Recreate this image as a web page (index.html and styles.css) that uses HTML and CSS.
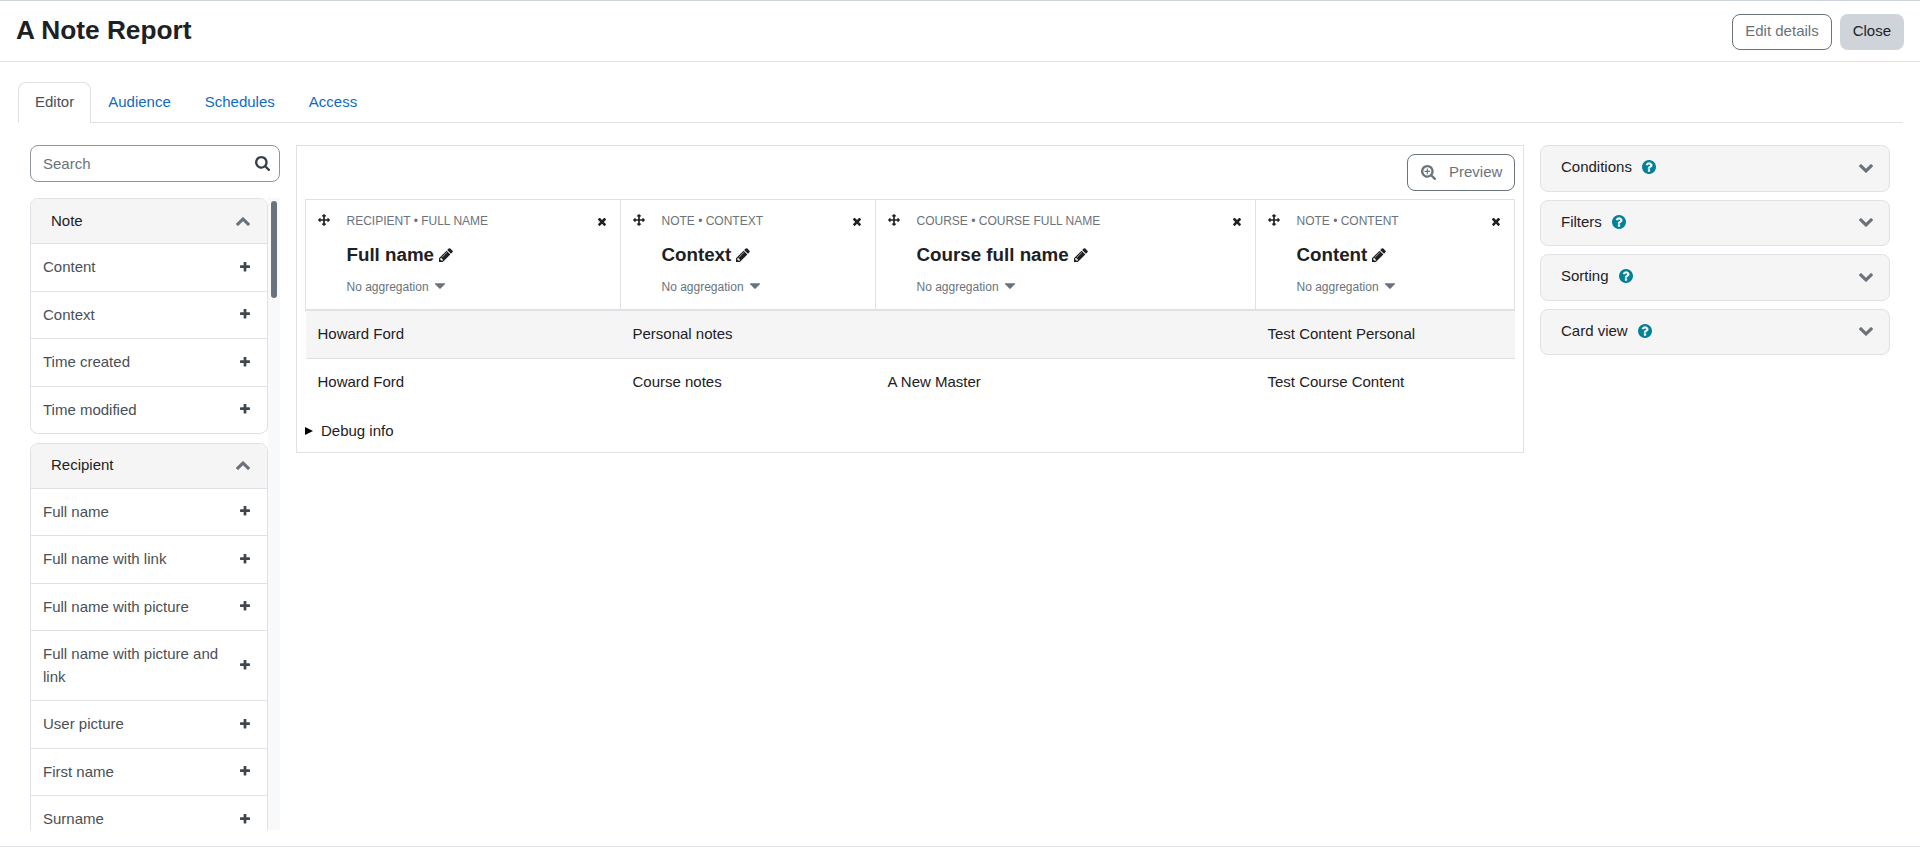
FILE: index.html
```html
<!DOCTYPE html>
<html lang="en">
<head>
<meta charset="utf-8">
<title>A Note Report</title>
<link rel="stylesheet" href="styles.css">
</head>
<body>
<svg class="defs" width="0" height="0" aria-hidden="true">
  <defs>
    <symbol id="i-plus" viewBox="192 192 1408 1408"><path fill="currentColor" d="M1600 736v192q0 40-28 68t-68 28h-416v416q0 40-28 68t-68 28h-192q-40 0-68-28t-28-68v-416h-416q-40 0-68-28t-28-68v-192q0-40 28-68t68-28h416v-416q0-40 28-68t68-28h192q40 0 68 28t28 68v416h416q40 0 68 28t28 68z"/></symbol>
    <symbol id="i-x" viewBox="302 238 1188 1316"><path fill="currentColor" d="M1490 1322q0 40-28 68l-136 136q-28 28-68 28t-68-28l-294-294-294 294q-28 28-68 28t-68-28l-136-136q-28-28-28-68t28-68l294-294-294-294q-28-28-28-68t28-68l136-136q28-28 68-28t68 28l294 294 294-294q28-28 68-28t68 28l136 136q28 28 28 68t-28 68l-294 294 294 294q28 28 28 68z"/></symbol>
    <symbol id="i-move" viewBox="0 0 1792 1792"><path fill="currentColor" d="M1792 896q0 26-19 45l-256 256q-19 19-45 19t-45-19-19-45v-128h-384v384h128q26 0 45 19t19 45-19 45l-256 256q-19 19-45 19t-45-19l-256-256q-19-19-19-45t19-45 45-19h128v-384h-384v128q0 26-19 45t-45 19-45-19l-256-256q-19-19-19-45t19-45l256-256q19-19 45-19t45 19 19 45v128h384v-384h-128q-26 0-45-19t-19-45 19-45l256-256q19-19 45-19t45 19l256 256q19 19 19 45t-19 45-45 19h-128v384h384v-128q0-26 19-45t45-19 45 19l256 256q19 19 19 45z"/></symbol>
    <symbol id="i-pencil" viewBox="128 128 1536 1536"><path fill="currentColor" d="M491 1536l91-91-235-235-91 91v107h128v128h107zm523-928q0-22-22-22-10 0-17 7l-542 542q-7 7-7 17 0 22 22 22 10 0 17-7l542-542q7-7 7-17zm-54-192l416 416-832 832h-416v-416zm683 96q0 53-37 90l-166 166-416-416 166-165q36-38 90-38 53 0 91 38l235 234q37 39 37 91z"/></symbol>
    <symbol id="i-caret" viewBox="384 640 1024 576"><path fill="currentColor" d="M1408 704q0 26-19 45l-448 448q-19 19-45 19t-45-19l-448-448q-19-19-19-45t19-45 45-19h896q26 0 45 19t19 45z"/></symbol>
    <symbol id="i-up" viewBox="109 480 1574 1035"><path fill="currentColor" d="M1683 1331l-166 165q-19 19-45 19t-45-19l-531-531-531 531q-19 19-45 19t-45-19l-166-165q-19-19-19-45.500t19-45.500l742-741q19-19 45-19t45 19l742 741q19 19 19 45.500t-19 45.500z"/></symbol>
    <symbol id="i-down" viewBox="109 533 1574 1035"><path fill="currentColor" d="M1683 808l-742 741q-19 19-45 19t-45-19l-742-741q-19-19-19-45.500t19-45.500l166-165q19-19 45-19t45 19l531 531 531-531q19-19 45-19t45 19l166 165q19 19 19 45.500t-19 45.500z"/></symbol>
    <symbol id="i-search" viewBox="64 128 1664 1664"><path fill="currentColor" d="M1216 832q0-185-131.500-316.500t-316.500-131.500-316.500 131.500-131.500 316.500 131.500 316.500 316.500 131.500 316.500-131.500 131.500-316.500zm512 832q0 52-38 90t-90 38q-54 0-90-38l-343-342q-179 124-399 124-143 0-273.500-55.500t-225-150-150-225-55.500-273.500 55.500-273.500 150-225 225-150 273.500-55.500 273.500 55.500 225 150 150 225 55.500 273.500q0 220-124 399l343 343q37 37 37 90z"/></symbol>
    <symbol id="i-zoom" viewBox="64 128 1664 1664"><path fill="currentColor" d="M1088 800v64q0 13-9.500 22.500t-22.500 9.500h-224v224q0 13-9.500 22.500t-22.500 9.500h-64q-13 0-22.500-9.500t-9.500-22.500v-224h-224q-13 0-22.500-9.500t-9.500-22.500v-64q0-13 9.500-22.500t22.500-9.500h224v-224q0-13 9.500-22.500t22.500-9.500h64q13 0 22.500 9.500t9.500 22.500v224h224q13 0 22.500 9.500t9.500 22.500zm128 32q0-185-131.500-316.500t-316.500-131.500-316.500 131.500-131.500 316.500 131.500 316.500 316.500 131.500 316.500-131.500 131.500-316.500zm512 832q0 53-37.500 90.500t-90.500 37.500q-54 0-90-38l-343-342q-179 124-399 124-143 0-273.500-55.500t-225-150-150-225-55.500-273.500 55.500-273.500 150-225 225-150 273.500-55.500 273.500 55.500 225 150 150 225 55.500 273.500q0 220-124 399l343 343q37 37 37 90z"/></symbol>
    <symbol id="i-help" viewBox="128 128 1536 1536"><path fill="currentColor" d="M1024 1376v-192q0-14-9-23t-23-9h-192q-14 0-23 9t-9 23v192q0 14 9 23t23 9h192q14 0 23-9t9-23zm256-672q0-88-55.500-163t-138.500-116-170-41q-243 0-371 213-15 24 8 42l132 100q7 6 19 6 16 0 25-12 53-68 86-92 34-24 86-24 48 0 85.500 26t37.500 59q0 38-20 61t-68 45q-63 28-115.500 86.500t-52.500 125.500v36q0 14 9 23t23 9h192q14 0 23-9t9-23q0-19 21.500-49.500t54.500-49.500q32-18 49-28.500t46-35 44.500-48 28-60.500 12.500-81zm384 192q0 209-103 385.500t-279.500 279.500-385.500 103-385.500-103-279.500-279.500-103-385.500 103-385.500 279.500-279.500 385.500-103 385.500 103 279.500 279.500 103 385.500z"/></symbol>
  </defs>
</svg>

<header class="page-header">
  <h1 class="page-title">A Note Report</h1>
  <div class="header-actions">
    <button class="btn btn-outline" type="button">Edit details</button>
    <button class="btn btn-secondary" type="button">Close</button>
  </div>
</header>

<nav class="tabs">
  <a class="tab tab-active">Editor</a>
  <a class="tab">Audience</a>
  <a class="tab">Schedules</a>
  <a class="tab">Access</a>
</nav>

<main class="editor">
  <aside class="sidebar">
    <div class="search">
      <input class="search-input" type="text" placeholder="Search">
      <svg class="search-icon"><use href="#i-search"/></svg>
    </div>
    <div class="sidebar-scroll">
      <div class="sidebar-list">
        <section class="card">
          <div class="card-head"><span>Note</span><svg class="ic-up"><use href="#i-up"/></svg></div>
          <div class="row"><span>Content</span><svg class="ic-plus"><use href="#i-plus"/></svg></div>
          <div class="row"><span>Context</span><svg class="ic-plus"><use href="#i-plus"/></svg></div>
          <div class="row"><span>Time created</span><svg class="ic-plus"><use href="#i-plus"/></svg></div>
          <div class="row"><span>Time modified</span><svg class="ic-plus"><use href="#i-plus"/></svg></div>
        </section>
        <section class="card">
          <div class="card-head"><span>Recipient</span><svg class="ic-up"><use href="#i-up"/></svg></div>
          <div class="row"><span>Full name</span><svg class="ic-plus"><use href="#i-plus"/></svg></div>
          <div class="row"><span>Full name with link</span><svg class="ic-plus"><use href="#i-plus"/></svg></div>
          <div class="row"><span>Full name with picture</span><svg class="ic-plus"><use href="#i-plus"/></svg></div>
          <div class="row"><span>Full name with picture and link</span><svg class="ic-plus"><use href="#i-plus"/></svg></div>
          <div class="row"><span>User picture</span><svg class="ic-plus"><use href="#i-plus"/></svg></div>
          <div class="row"><span>First name</span><svg class="ic-plus"><use href="#i-plus"/></svg></div>
          <div class="row"><span>Surname</span><svg class="ic-plus"><use href="#i-plus"/></svg></div>
        </section>
      </div>
      <div class="scroll-track"><div class="scroll-thumb"></div></div>
    </div>
  </aside>

  <section class="report">
    <div class="report-bar">
      <button class="btn btn-outline btn-preview" type="button"><svg class="ic-zoom"><use href="#i-zoom"/></svg>Preview</button>
    </div>
    <table class="grid">
      <colgroup><col class="c1"><col class="c2"><col class="c3"><col class="c4"></colgroup>
      <thead>
        <tr>
          <th>
            <div class="col-top"><svg class="ic-move"><use href="#i-move"/></svg><span class="col-sub">RECIPIENT • FULL NAME</span><svg class="ic-x"><use href="#i-x"/></svg></div>
            <div class="col-title">Full name<svg class="ic-pencil"><use href="#i-pencil"/></svg></div>
            <div class="col-agg">No aggregation<svg class="ic-caret"><use href="#i-caret"/></svg></div>
          </th>
          <th>
            <div class="col-top"><svg class="ic-move"><use href="#i-move"/></svg><span class="col-sub">NOTE • CONTEXT</span><svg class="ic-x"><use href="#i-x"/></svg></div>
            <div class="col-title">Context<svg class="ic-pencil"><use href="#i-pencil"/></svg></div>
            <div class="col-agg">No aggregation<svg class="ic-caret"><use href="#i-caret"/></svg></div>
          </th>
          <th>
            <div class="col-top"><svg class="ic-move"><use href="#i-move"/></svg><span class="col-sub">COURSE • COURSE FULL NAME</span><svg class="ic-x"><use href="#i-x"/></svg></div>
            <div class="col-title">Course full name<svg class="ic-pencil"><use href="#i-pencil"/></svg></div>
            <div class="col-agg">No aggregation<svg class="ic-caret"><use href="#i-caret"/></svg></div>
          </th>
          <th>
            <div class="col-top"><svg class="ic-move"><use href="#i-move"/></svg><span class="col-sub">NOTE • CONTENT</span><svg class="ic-x"><use href="#i-x"/></svg></div>
            <div class="col-title">Content<svg class="ic-pencil"><use href="#i-pencil"/></svg></div>
            <div class="col-agg">No aggregation<svg class="ic-caret"><use href="#i-caret"/></svg></div>
          </th>
        </tr>
      </thead>
      <tbody>
        <tr class="striped"><td>Howard Ford</td><td>Personal notes</td><td></td><td>Test Content Personal</td></tr>
        <tr><td>Howard Ford</td><td>Course notes</td><td>A New Master</td><td>Test Course Content</td></tr>
      </tbody>
    </table>
    <details class="debug"><summary>Debug info</summary></details>
  </section>

  <aside class="settings">
    <div class="setting"><span>Conditions</span><svg class="ic-help"><use href="#i-help"/></svg><svg class="ic-down"><use href="#i-down"/></svg></div>
    <div class="setting"><span>Filters</span><svg class="ic-help"><use href="#i-help"/></svg><svg class="ic-down"><use href="#i-down"/></svg></div>
    <div class="setting"><span>Sorting</span><svg class="ic-help"><use href="#i-help"/></svg><svg class="ic-down"><use href="#i-down"/></svg></div>
    <div class="setting"><span>Card view</span><svg class="ic-help"><use href="#i-help"/></svg><svg class="ic-down"><use href="#i-down"/></svg></div>
  </aside>
</main>
<footer class="page-footer"></footer>
</body>
</html>
```

FILE: styles.css
```css
* { box-sizing: border-box; }
html, body { margin: 0; height: 847px; overflow: hidden; }
body {
  display: flex;
  flex-direction: column;
  background: #fff;
  color: #1d2125;
  font-family: "Liberation Sans", Arial, sans-serif;
  font-size: 15px;
  line-height: 22.5px;
}
.defs { position: absolute; }
svg { display: block; flex: none; }

/* Header */
.page-header {
  height: 62px;
  flex: none;
  padding: 0 16px;
  display: flex;
  align-items: center;
  justify-content: space-between;
  border-top: 1px solid #ced4da;
  border-bottom: 1px solid #dee2e6;
}
.page-title { margin: 0 0 2px; font-size: 26.25px; line-height: 34px; font-weight: 700; }
.header-actions { display: flex; gap: 8px; margin-top: 1px; }
.btn {
  height: 36px;
  padding: 0 12px;
  border-radius: 8px;
  border: 1px solid transparent;
  font: inherit;
  line-height: 22.5px;
  background: none;
}
.btn-outline { border-color: #6a737b; color: #6a737b; background: #fff; }
.btn-secondary { background: #ced4da; color: #1d2125; }

/* Tabs */
.tabs {
  flex: none;
  display: flex;
  height: 41px;
  margin: 20px 17px 0 18px;
  border-bottom: 1px solid #dee2e6;
}
.tab {
  color: #0f6cbf;
  height: 41px;
  border: 1px solid transparent;
  border-bottom: 0;
  padding: 8px 16px 0;
  border-radius: 8px 8px 0 0;
}
.tab-active {
  color: #495057;
  background: #fff;
  border-color: #dee2e6;
}

/* Editor layout */
.editor {
  flex: 1;
  min-height: 0;
  display: flex;
  align-items: flex-start;
  gap: 16px;
  padding: 22px 0 0 30px;
}

/* Sidebar */
.sidebar { width: 250px; flex: none; }
.search { position: relative; margin-bottom: 16px; }
.search-input {
  display: block;
  width: 100%;
  height: 37px;
  padding: 0 12px;
  border: 1px solid #8f959e;
  border-radius: 8px;
  font: inherit;
  color: #495057;
  outline: none;
}
.search-input::placeholder { color: #6a737b; opacity: 1; }
.search-icon { position: absolute; right: 10px; top: 11px; width: 15px; height: 15px; color: #343f4a; }

.sidebar-scroll { display: flex; height: 632px; overflow: hidden; }
.sidebar-list { width: 238px; flex: none; display: flex; flex-direction: column; gap: 8.7px; }
.scroll-track { flex: 1; background: #f8f9fa; padding: 3px 3px 0; }
.scroll-thumb { width: 6px; height: 97px; border-radius: 3px; background: #6a737b; }

.card { flex: none; border: 1px solid #dee2e6; border-radius: 8px; overflow: hidden; background: #fff; }
.card-head {
  display: flex;
  align-items: center;
  justify-content: space-between;
  height: 45px;
  padding: 0 17px 0 20px;
  background: #f5f5f5;
  border-bottom: 1px solid #dee2e6;
}
.ic-up { width: 14px; height: 9px; color: #6a737b; }
.row {
  display: flex;
  align-items: center;
  justify-content: space-between;
  gap: 20px;
  padding: 12px;
  color: #495057;
  border-bottom: 1px solid #dee2e6;
}
.row:last-child { border-bottom: 0; }
.ic-plus { width: 10px; height: 10px; color: #3f474e; margin-right: 5px; margin-top: -1px; }

/* Report */
.report {
  width: 1228px;
  flex: none;
  height: 308px;
  padding: 8px;
  border: 1px solid #dee2e6;
}
.report-bar { display: flex; justify-content: flex-end; margin-bottom: 8px; }
.btn-preview { display: flex; align-items: center; gap: 13px; height: 37px; width: 108px; padding: 0 12px 0 13px; }
.ic-zoom { width: 15px; height: 15px; }
.grid { width: 1209px; table-layout: fixed; border-collapse: collapse; }
.c1 { width: 315px; }
.c2 { width: 255px; }
.c3 { width: 380px; }
.c4 { width: 259px; }
.grid th {
  height: 110px;
  padding: 12px 14px 0 11.5px;
  vertical-align: top;
  text-align: left;
  font-weight: 400;
  border: 1px solid #dee2e6;
  border-bottom-width: 2px;
}
.col-top { display: flex; align-items: center; height: 18px; }
.ic-move { width: 12px; height: 12px; color: #1d2125; margin-right: 17px; margin-top: -2px; }
.col-sub { flex: 1; font-size: 12px; line-height: 18px; color: #6a737b; }
.ic-x { width: 8px; height: 9px; color: #1d2125; }
.col-title {
  display: flex;
  align-items: center;
  gap: 5px;
  margin: 13px 0 0 29px;
  font-size: 18.75px;
  line-height: 24px;
  font-weight: 700;
}
.ic-pencil { width: 14px; height: 14px; color: #1d2125; }
.col-agg {
  display: flex;
  align-items: center;
  gap: 6px;
  margin: 11px 0 0 29px;
  font-size: 12px;
  line-height: 18px;
  color: #6a737b;
}
.ic-caret { width: 10px; height: 6px; margin-top: -3px; color: #6a737b; }
.grid td { height: 49px; padding: 0 12px; border-bottom: 1px solid #dee2e6; vertical-align: middle; }
.grid tbody tr:last-child td { border-bottom: 0; height: 46px; }
.grid .striped td { background: #f5f5f5; }
.debug { margin-top: 15px; }
.debug summary { cursor: pointer; list-style: none; display: flex; align-items: center; gap: 8px; }
.debug summary::-webkit-details-marker { display: none; }
.debug summary::before {
  content: "";
  flex: none;
  border-left: 8px solid #000;
  border-top: 4.5px solid transparent;
  border-bottom: 4.5px solid transparent;
}

/* Settings */
.settings { width: 350px; flex: none; display: flex; flex-direction: column; gap: 8px; }
.setting {
  display: flex;
  align-items: center;
  height: 46.5px;
  padding: 0 16px 0 20px;
  background: #f5f5f5;
  border: 1px solid #dee2e6;
  border-radius: 8px;
}
.setting span { margin-top: -2px; }
.ic-help { width: 14px; height: 14px; color: #008196; margin: -2px 0 0 10px; }
.ic-down { width: 14px; height: 9px; color: #6a737b; margin-left: auto; }

/* Footer */
.page-footer { flex: none; height: 1px; background: #dee2e6; }
```
